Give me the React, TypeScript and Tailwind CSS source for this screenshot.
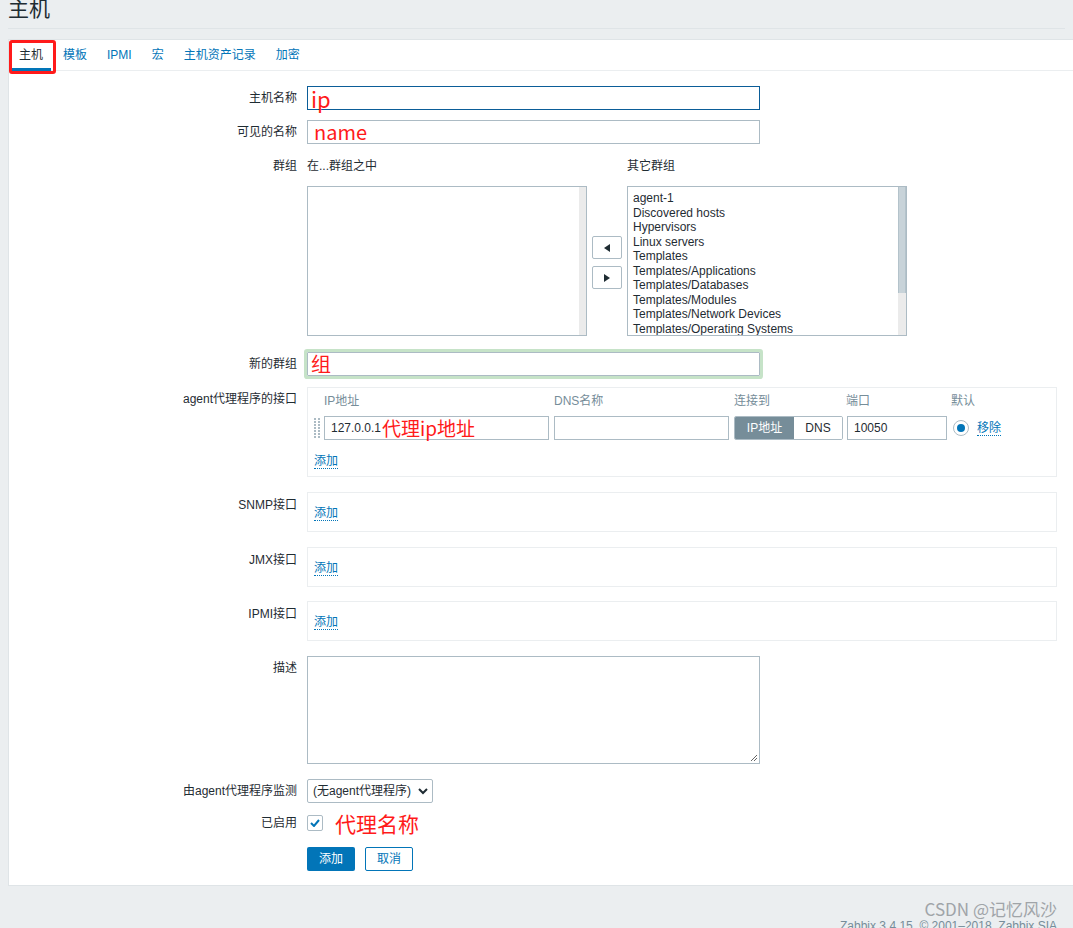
import React from 'react';

const font = { fontFamily: 'Arial, "Liberation Sans", "Noto Sans CJK SC", sans-serif' };
const redFont = { fontFamily: '"Noto Sans CJK SC", "Microsoft YaHei", sans-serif' };

const tabs = ['主机', '模板', 'IPMI', '宏', '主机资产记录', '加密'];
const otherGroups = [
    'agent-1',
    'Discovered hosts',
    'Hypervisors',
    'Linux servers',
    'Templates',
    'Templates/Applications',
    'Templates/Databases',
    'Templates/Modules',
    'Templates/Network Devices',
    'Templates/Operating Systems',
];

function AddLink() {
    return (
        <span className="text-[#0275b8] border-b border-dotted border-[#0275b8] leading-[14px] cursor-pointer">添加</span>
    );
}

function Row({ label, children, labelClass = '' }: { label: string; children: React.ReactNode; labelClass?: string }) {
    return (
        <div className="flex">
            <div className={`w-[298px] shrink-0 text-right pr-[10px] ${labelClass}`}>{label}</div>
            <div className="flex-1 min-w-0">{children}</div>
        </div>
    );
}

function IfaceBox({ label }: { label: string }) {
    return (
        <Row label={label} labelClass="pt-[4px]">
            <div className="w-[750px] h-[40px] border border-[#ebeef0] pl-[6px] pt-[11px]">
                <AddLink />
            </div>
        </Row>
    );
}

export default function App() {
    return (
        <div className="min-h-[928px] bg-[#ebeef0] text-[12px] text-[#1f2c33] overflow-hidden relative" style={font}>
            {/* header */}
            <div className="h-[29px] border-b border-[#dfe4e7] mx-[8px] overflow-hidden">
                <h1 className="text-[21px] leading-[21px] mt-[-3px] text-[#1f2c33] font-normal" style={redFont}>主机</h1>
            </div>

            <div className="mt-[10px] ml-[8px] mr-[-4px] bg-white border border-[#dfe4e7]">
                {/* tabs */}
                <div className="relative flex h-[31px] border-b border-[#ebeef0]">
                    {tabs.map((t, i) => (
                        <div
                            key={t}
                            className={`relative px-[10px] h-[30px] leading-[30px] ${i === 0 ? 'text-[#1f2c33]' : 'text-[#0275b8]'}`}
                        >
                            {t}
                            {i === 0 && <div className="absolute left-[2px] right-[2px] bottom-[-1px] h-[3px] bg-[#0275b8]" />}
                        </div>
                    ))}
                    <div className="absolute left-[0px] top-[0px] w-[47px] h-[34px] border-[3px] border-[#ff1a1a] rounded-[3px]" />
                </div>

                <div className="pt-[15px] pb-[14px] flex flex-col">
                    {/* host name */}
                    <Row label="主机名称" labelClass="leading-[24px]">
                        <div className="w-[453px] h-[24px] border border-[#0b5d98] flex items-center pl-[3px]">
                            <span className="text-[#ff1a1a] text-[22px] leading-[20px]" style={redFont}>ip</span>
                        </div>
                    </Row>

                    <div className="mt-[10px]">
                        <Row label="可见的名称" labelClass="leading-[24px]">
                            <div className="w-[453px] h-[24px] border border-[#acbbc4] flex items-center pl-[6px]">
                                <span className="text-[#ff1a1a] text-[20px] leading-[20px]" style={redFont}>name</span>
                            </div>
                        </Row>
                    </div>

                    {/* groups */}
                    <div className="mt-[14px]">
                        <Row label="群组" labelClass="leading-[16px]">
                            <div className="flex">
                                <div className="w-[280px]">
                                    <div className="leading-[16px]">在...群组之中</div>
                                    <div className="mt-[12px] h-[150px] border border-[#acbbc4] flex justify-end">
                                        <div className="w-[7px] h-full bg-[#ebebeb]" />
                                    </div>
                                </div>
                                <div className="w-[40px] flex flex-col items-center pt-[78px] gap-[7px]">
                                    <div className="w-[30px] h-[23px] border border-[#acbbc4] rounded-[2px] flex items-center justify-center">
                                        <svg width="6" height="8" viewBox="0 0 6 8"><path d="M6 0 L0 4 L6 8 Z" fill="#1f2c33" /></svg>
                                    </div>
                                    <div className="w-[30px] h-[23px] border border-[#acbbc4] rounded-[2px] flex items-center justify-center">
                                        <svg width="6" height="8" viewBox="0 0 6 8"><path d="M0 0 L6 4 L0 8 Z" fill="#1f2c33" /></svg>
                                    </div>
                                </div>
                                <div className="w-[280px]">
                                    <div className="leading-[16px]">其它群组</div>
                                    <div className="mt-[12px] h-[150px] border border-[#acbbc4] flex overflow-hidden">
                                        <div className="flex-1 pl-[5px] pt-[4px]">
                                            {otherGroups.map(g => (
                                                <div key={g} className="leading-[14.5px] whitespace-nowrap">{g}</div>
                                            ))}
                                        </div>
                                        <div className="w-[8px] h-full bg-[#ebebeb]">
                                            <div className="h-[106px] bg-[#c8d3d9] border-x border-[#b4c3cb]" />
                                        </div>
                                    </div>
                                </div>
                            </div>
                        </Row>
                    </div>

                    {/* new group */}
                    <div className="mt-[16px]">
                        <Row label="新的群组" labelClass="leading-[24px]">
                            <div className="w-[453px] h-[24px] border border-[#acbbc4] rounded-[1px] shadow-[0_0_0_3px_#c6e3c8] flex items-center pl-[3px]">
                                <span className="text-[#ff1a1a] text-[20px] leading-[20px]" style={redFont}>组</span>
                            </div>
                        </Row>
                    </div>

                    {/* agent interfaces */}
                    <div className="mt-[11px]">
                        <Row label="agent代理程序的接口" labelClass="pt-[3px]">
                            <div className="w-[750px] h-[90px] border border-[#ebeef0] pl-[5px] pt-[5px]">
                                <div className="flex text-[#768d99] leading-[16px]">
                                    <div className="w-[11px]" />
                                    <div className="w-[230px]">IP地址</div>
                                    <div className="w-[180px]">DNS名称</div>
                                    <div className="w-[112px]">连接到</div>
                                    <div className="w-[105px]">端口</div>
                                    <div>默认</div>
                                </div>
                                <div className="flex items-center mt-[7px] h-[24px]">
                                    <div className="w-[11px] h-[22px] grid grid-cols-2 gap-x-[1px] gap-y-[1px] content-start pt-[1px] pl-[1px] pr-[4px]">
                                        {Array.from({ length: 14 }).map((_, i) => (
                                            <div key={i} className="w-[2px] h-[2px] bg-[#acbbc4]" />
                                        ))}
                                    </div>
                                    <div className="w-[225px] h-[24px] border border-[#acbbc4] flex items-center pl-[6px] whitespace-nowrap">
                                        <span>127.0.0.1</span>
                                        <span className="text-[#ff1a1a] text-[19px] leading-[20px] ml-[1px]" style={redFont}>代理ip地址</span>
                                    </div>
                                    <div className="w-[175px] h-[24px] border border-[#acbbc4] ml-[5px]" />
                                    <div className="ml-[5px] flex h-[24px] border border-[#acbbc4] rounded-[2px] overflow-hidden">
                                        <div className="w-[59px] bg-[#768d99] text-white flex items-center justify-center">IP地址</div>
                                        <div className="w-[48px] bg-white flex items-center justify-center">DNS</div>
                                    </div>
                                    <div className="w-[100px] h-[24px] border border-[#acbbc4] ml-[4px] flex items-center pl-[6px]">10050</div>
                                    <div className="ml-[6px] w-[16px] h-[16px] rounded-full border border-[#acbbc4] flex items-center justify-center">
                                        <div className="w-[8px] h-[8px] rounded-full bg-[#0275b8]" />
                                    </div>
                                    <span className="ml-[8px] text-[#0275b8] border-b border-dotted border-[#0275b8] leading-[14px]">移除</span>
                                </div>
                                <div className="mt-[12px] pl-[1px]">
                                    <AddLink />
                                </div>
                            </div>
                        </Row>
                    </div>

                    <div className="mt-[15px]"><IfaceBox label="SNMP接口" /></div>
                    <div className="mt-[15px]"><IfaceBox label="JMX接口" /></div>
                    <div className="mt-[14px]"><IfaceBox label="IPMI接口" /></div>

                    {/* description */}
                    <div className="mt-[15px]">
                        <Row label="描述" labelClass="pt-[3px]">
                            <div className="relative w-[453px] h-[108px] border border-[#acbbc4]">
                                <svg className="absolute right-[1px] bottom-[1px]" width="8" height="8" viewBox="0 0 8 8">
                                    <path d="M7 1 L1 7 M7 4 L4 7" stroke="#666" strokeWidth="1" />
                                </svg>
                            </div>
                        </Row>
                    </div>

                    {/* proxy */}
                    <div className="mt-[15px]">
                        <Row label="由agent代理程序监测" labelClass="leading-[24px]">
                            <div className="w-[126px] h-[24px] border border-[#acbbc4] rounded-[2px] flex items-center justify-between pl-[5px] pr-[4px]">
                                <span className="whitespace-nowrap">(无agent代理程序)</span>
                                <svg width="10" height="7" viewBox="0 0 10 7"><path d="M1 1 L5 5 L9 1" stroke="#1f2c33" strokeWidth="2" fill="none" /></svg>
                            </div>
                        </Row>
                    </div>

                    {/* enabled */}
                    <div className="mt-[8px]">
                        <Row label="已启用" labelClass="leading-[24px]">
                            <div className="h-[24px] flex items-center">
                                <div className="w-[16px] h-[16px] border border-[#acbbc4] rounded-[2px] flex items-center justify-center">
                                    <svg width="10" height="8" viewBox="0 0 10 8"><path d="M1 4 L4 7 L9 1" stroke="#0275b8" strokeWidth="2" fill="none" /></svg>
                                </div>
                                <span className="ml-[12px] text-[#ff1a1a] text-[21px] leading-[22px]" style={redFont}>代理名称</span>
                            </div>
                        </Row>
                    </div>

                    {/* buttons */}
                    <div className="mt-[12px]">
                        <Row label="">
                            <div className="flex gap-[10px]">
                                <div className="w-[48px] h-[24px] bg-[#0275b8] text-white rounded-[2px] flex items-center justify-center">添加</div>
                                <div className="w-[48px] h-[24px] border border-[#0275b8] text-[#0275b8] rounded-[2px] flex items-center justify-center">取消</div>
                            </div>
                        </Row>
                    </div>
                </div>
            </div>

            {/* footer */}
            <div className="pt-[33px] pr-[16px] text-right text-[#768d99] text-[12px] leading-[14px]">
                Zabbix 3.4.15. © 2001–2018, Zabbix SIA
            </div>
            <div className="absolute right-[16px] top-[899px] text-[17px] leading-[20px] text-[#a0a4a8]" style={redFont}>
                CSDN @记忆风沙
            </div>
        </div>
    );
}
